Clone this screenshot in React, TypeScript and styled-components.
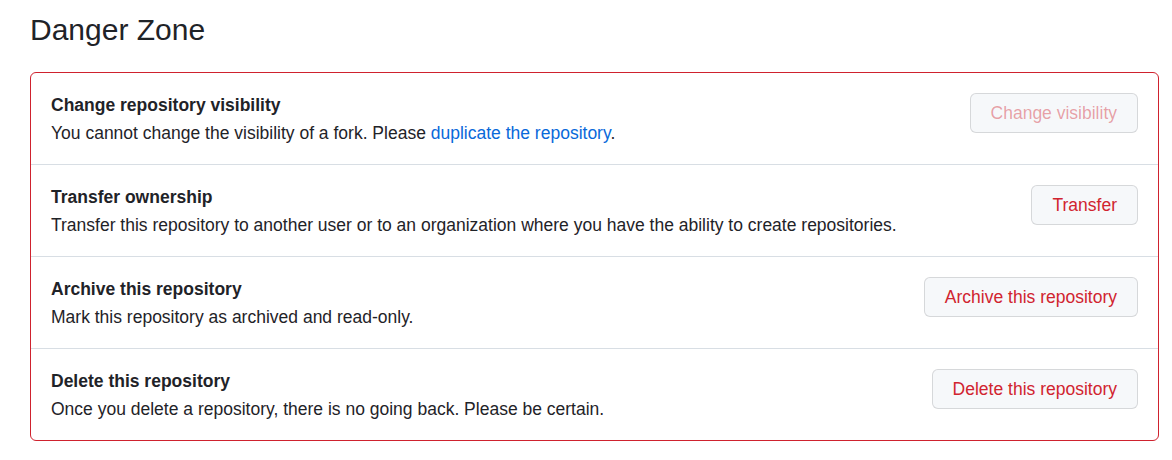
import type { ReactNode } from "react";
import styled, { createGlobalStyle } from "styled-components";

const GlobalStyle = createGlobalStyle`
  body {
    margin: 0;
    background: #ffffff;
    font-family: "Liberation Sans", Arial, sans-serif;
    color: #1f2328;
  }
`;

const Page = styled.div`
  padding: 0 13px 0 30px;
  width: 1129px;
`;

const Heading = styled.h2`
  margin: 0;
  padding-top: 11px;
  height: 72px;
  box-sizing: border-box;
  font-size: 30px;
  font-weight: 400;
  line-height: 38px;
`;

const Box = styled.div`
  border: 1px solid #cf222e;
  border-radius: 6px;
`;

const Row = styled.div`
  display: flex;
  align-items: flex-start;
  justify-content: space-between;
  gap: 16px;
  height: 91px;
  box-sizing: border-box;
  padding: 19px 20px 0;
  & + & {
    height: 92px;
    border-top: 1px solid #d8dee4;
  }
`;

const Info = styled.div`
  display: flex;
  flex-direction: column;
  gap: 2px;
`;

const Title = styled.strong`
  font-size: 17.5px;
  font-weight: 700;
  line-height: 26px;
`;

const Desc = styled.span`
  font-size: 17.5px;
  line-height: 26px;
`;

const Link = styled.a`
  color: #0969da;
  text-decoration: none;
`;

const DangerButton = styled.button`
  flex-shrink: 0;
  height: 40px;
  margin-top: 1px;
  padding: 0 20px;
  border: 1px solid rgba(31, 35, 40, 0.15);
  border-radius: 6px;
  background: #f6f8fa;
  color: #d1242f;
  font-family: inherit;
  font-size: 17.5px;
  cursor: pointer;
  &:disabled {
    color: rgba(209, 36, 47, 0.42);
    cursor: default;
  }
`;

type Item = {
  title: string;
  text: ReactNode;
  action: string;
  disabled?: boolean;
};

const items: Item[] = [
  {
    title: "Change repository visibility",
    text: (
      <>
        You cannot change the visibility of a fork. Please{" "}
        <Link href="#">duplicate the repository</Link>.
      </>
    ),
    action: "Change visibility",
    disabled: true,
  },
  {
    title: "Transfer ownership",
    text: "Transfer this repository to another user or to an organization where you have the ability to create repositories.",
    action: "Transfer",
  },
  {
    title: "Archive this repository",
    text: "Mark this repository as archived and read-only.",
    action: "Archive this repository",
  },
  {
    title: "Delete this repository",
    text: "Once you delete a repository, there is no going back. Please be certain.",
    action: "Delete this repository",
  },
];

export default function App() {
  return (
    <Page>
      <GlobalStyle />
      <Heading>Danger Zone</Heading>
      <Box>
        {items.map((item) => (
          <Row key={item.title}>
            <Info>
              <Title>{item.title}</Title>
              <Desc>{item.text}</Desc>
            </Info>
            <DangerButton disabled={item.disabled}>{item.action}</DangerButton>
          </Row>
        ))}
      </Box>
    </Page>
  );
}
